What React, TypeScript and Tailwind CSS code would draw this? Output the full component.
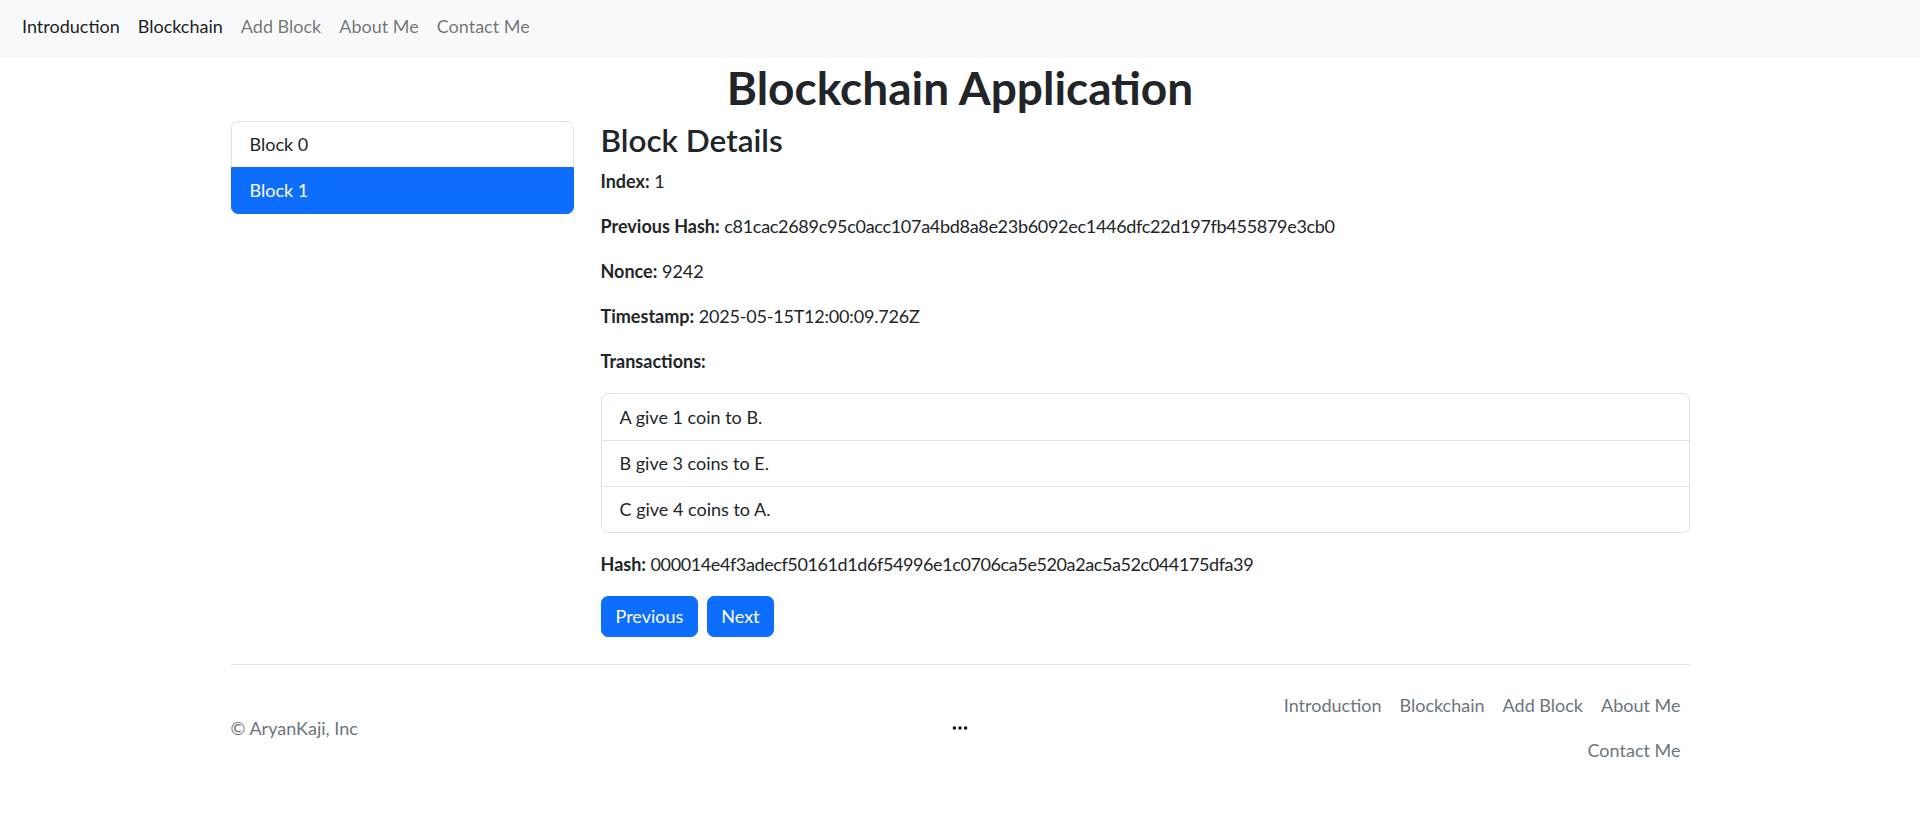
import React from "react";

const navLinks = [
  { label: "Introduction", dark: true },
  { label: "Blockchain", dark: true },
  { label: "Add Block", dark: false },
  { label: "About Me", dark: false },
  { label: "Contact Me", dark: false },
];

const footerLinks = ["Introduction", "Blockchain", "Add Block", "About Me", "Contact Me"];

const transactions = ["A give 1 coin to B.", "B give 3 coins to E.", "C give 4 coins to A."];

export default function App() {
  return (
    <div
      className="min-h-[822px] bg-white text-[#212529] text-[18px] leading-[27px]"
      style={{ fontFamily: "Lato, 'Segoe UI', 'Noto Sans', sans-serif" }}
    >
      {/* Navbar */}
      <nav className="h-[58px] bg-[#f8f9fa] flex items-start pt-[13px] px-[13px]">
        <ul className="flex">
          {navLinks.map((l) => (
            <li key={l.label}>
              <a
                href="#"
                className={`block px-[9px] leading-[27px] ${l.dark ? "text-black/90" : "text-black/55"}`}
              >
                {l.label}
              </a>
            </li>
          ))}
        </ul>
      </nav>

      <div className="w-[1459px] mx-auto">
        <h1 className="mt-[3px] mb-[6px] text-center text-[46px] leading-[54px] font-bold text-[#212529]">
          Blockchain Application
        </h1>

        <div className="flex gap-[27px] items-start">
          {/* Left list */}
          <div className="w-[343px] flex flex-col">
            <div className="h-[47px] flex items-center px-[18px] border border-[#dee2e6] rounded-t-[7px] bg-white">
              Block 0
            </div>
            <div className="h-[47px] flex items-center px-[18px] border border-[#0d6efd] -mt-px rounded-b-[7px] bg-[#0d6efd] text-white">
              Block 1
            </div>
          </div>

          {/* Right details */}
          <div className="flex-1 min-w-0">
            <h3 className="text-[31.5px] leading-[38px] font-semibold mb-[9px]">Block Details</h3>
            <p className="mb-[18px]">
              <strong className="font-bold">Index:</strong> 1
            </p>
            <p className="mb-[18px]">
              <strong className="font-bold">Previous Hash:</strong>{" "}
              <span className="tracking-[-0.3px]">
                c81cac2689c95c0acc107a4bd8a8e23b6092ec1446dfc22d197fb455879e3cb0
              </span>
            </p>
            <p className="mb-[18px]">
              <strong className="font-bold">Nonce:</strong> 9242
            </p>
            <p className="mb-[18px]">
              <strong className="font-bold">Timestamp:</strong>{" "}
              <span className="tracking-[-0.2px]">2025-05-15T12:00:09.726Z</span>
            </p>
            <p className="mb-[18px]">
              <strong className="font-bold">Transactions:</strong>
            </p>
            <ul className="mb-[18px] border border-[#dee2e6] rounded-[7px]">
              {transactions.map((t, i) => (
                <li
                  key={t}
                  className={`h-[46px] flex items-center px-[18px] ${i > 0 ? "border-t border-[#dee2e6]" : ""}`}
                >
                  {t}
                </li>
              ))}
            </ul>
            <p className="mb-[18px]">
              <strong className="font-bold">Hash:</strong>{" "}
              <span className="tracking-[-0.4px]">
                000014e4f3adecf50161d1d6f54996e1c0706ca5e520a2ac5a52c044175dfa39
              </span>
            </p>
            <div className="flex gap-[9px]">
              <button className="h-[41px] px-[14px] rounded-[7px] bg-[#0d6efd] text-white border border-[#0d6efd]">
                Previous
              </button>
              <button className="h-[41px] px-[13px] rounded-[7px] bg-[#0d6efd] text-white border border-[#0d6efd]">
                Next
              </button>
            </div>
          </div>
        </div>

        {/* Footer */}
        <footer className="mt-[27px] border-t border-[#dee2e6] py-[18px] flex items-center">
          <p className="w-1/3 text-[#6c757d]">© AryanKaji, Inc</p>
          <div className="w-1/3 flex items-center justify-center">
            <svg width="18" height="18" viewBox="0 0 16 16" fill="#000">
              <circle cx="3" cy="8" r="1.5" />
              <circle cx="8" cy="8" r="1.5" />
              <circle cx="13" cy="8" r="1.5" />
            </svg>
          </div>
          <ul className="w-1/3 flex flex-wrap justify-end">
            {footerLinks.map((l) => (
              <li key={l}>
                <a href="#" className="block px-[9px] py-[9px] leading-[27px] text-[#6c757d]">
                  {l}
                </a>
              </li>
            ))}
          </ul>
        </footer>
      </div>
    </div>
  );
}
